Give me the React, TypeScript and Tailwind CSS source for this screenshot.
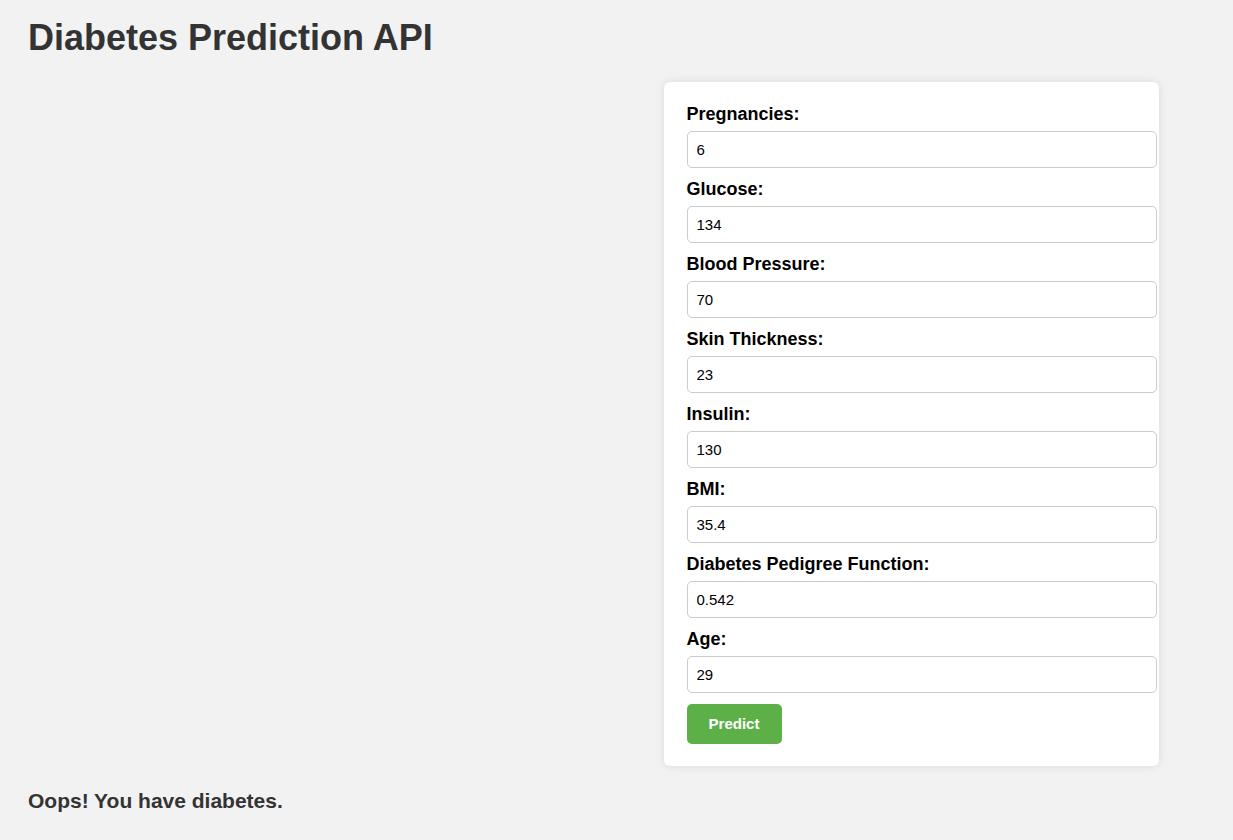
import { useState } from "react";

const FIELDS: { key: string; label: string; value: string }[] = [
  { key: "pregnancies", label: "Pregnancies:", value: "6" },
  { key: "glucose", label: "Glucose:", value: "134" },
  { key: "bloodPressure", label: "Blood Pressure:", value: "70" },
  { key: "skinThickness", label: "Skin Thickness:", value: "23" },
  { key: "insulin", label: "Insulin:", value: "130" },
  { key: "bmi", label: "BMI:", value: "35.4" },
  { key: "dpf", label: "Diabetes Pedigree Function:", value: "0.542" },
  { key: "age", label: "Age:", value: "29" },
];

export default function App() {
  const [values, setValues] = useState<Record<string, string>>(
    Object.fromEntries(FIELDS.map((f) => [f.key, f.value]))
  );

  return (
    <div className="min-h-[840px] bg-[#f2f2f2] px-[28px] pt-[17px] font-['Liberation_Sans',Arial,sans-serif] text-[#333]">
      <h1 className="text-[36px] font-bold leading-[41px]">Diabetes Prediction API</h1>

      {/* Form card */}
      <div className="mt-[24px] ml-[636px] w-[495px] rounded-[6px] bg-white px-[22.5px] pt-[22px] pb-[22px] shadow-[0_0_10px_rgba(0,0,0,0.1)]">
        <form onSubmit={(e) => e.preventDefault()}>
          {FIELDS.map((f) => (
            <div key={f.key}>
              <label htmlFor={f.key} className="mb-[6px] block text-[18px] font-bold leading-[21px] text-black">
                {f.label}
              </label>
              <input
                id={f.key}
                type="text"
                value={values[f.key]}
                onChange={(e) => setValues({ ...values, [f.key]: e.target.value })}
                className="mb-[11px] block h-[37px] w-[470px] rounded-[5px] border border-[#ccc] bg-white px-[9px] text-[15px] text-black outline-none"
              />
            </div>
          ))}
          <button
            type="submit"
            className="h-[40px] w-[95px] rounded-[5px] bg-[#5cb047] text-[15px] font-bold text-white"
          >
            Predict
          </button>
        </form>
      </div>

      <h3 className="mt-[23px] text-[21px] font-bold leading-[24px]">Oops! You have diabetes.</h3>
    </div>
  );
}
